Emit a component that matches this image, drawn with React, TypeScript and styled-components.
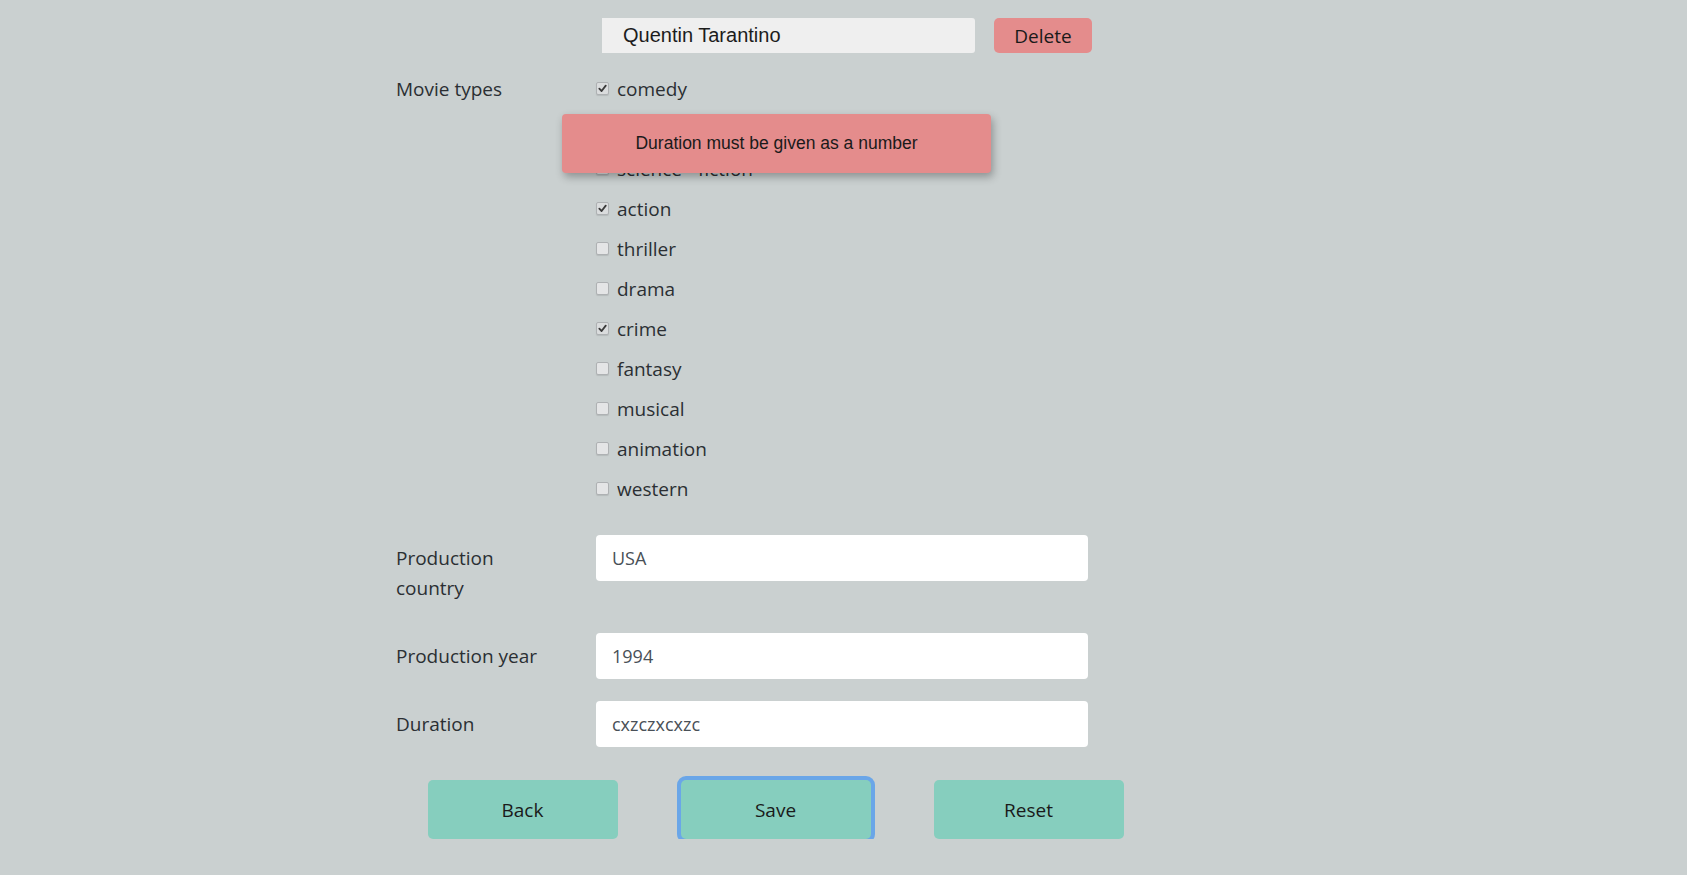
import React from "react";
import styled, { createGlobalStyle, css } from "styled-components";

const GlobalStyle = createGlobalStyle`
  html, body {
    margin: 0;
    padding: 0;
    background: #cad0d0;
  }
  body {
    font-family: "Open Sans", "Noto Sans", sans-serif;
    color: #2b2f33;
  }
  * { box-sizing: border-box; }
`;

const Form = styled.form`
  position: relative;
  width: 759px;
  margin-left: 396px;
  padding-top: 18px;
`;

const NameRow = styled.div`
  display: flex;
  align-items: center;
  gap: 19px;
  margin-left: 206px;
`;

const NameInput = styled.input`
  width: 373px;
  height: 35px;
  border: none;
  border-radius: 0 3px 3px 0;
  background: #efefef;
  padding: 0 0 0 21px;
  font-family: "Liberation Sans", Arial, sans-serif;
  font-size: 20px;
  color: #1c1c1c;
  outline: none;
`;

const DeleteButton = styled.button`
  width: 98px;
  height: 35px;
  border: none;
  border-radius: 5px;
  background: #e48c8c;
  font-family: "Open Sans", sans-serif;
  font-size: 19px;
  color: #1a1a1a;
  padding: 0;
  cursor: pointer;
`;

const TypesRow = styled.div`
  display: grid;
  grid-template-columns: 200px 1fr;
  margin-top: 16px;
`;

const Label = styled.label`
  font-size: 19px;
  line-height: 30px;
  color: #2b2f33;
`;

const TypesLabel = styled(Label)`
  line-height: 40px;
`;

const CheckList = styled.div`
  display: flex;
  flex-direction: column;
`;

const CheckRow = styled.label`
  display: flex;
  align-items: center;
  gap: 8px;
  height: 40px;
  font-size: 19px;
  color: #2b2f33;
`;

const Box = styled.span<{ $checked: boolean }>`
  width: 13px;
  height: 13px;
  border: 1px solid #aeb1b3;
  border-radius: 2px;
  background: #e4e5e6;
  display: inline-flex;
  align-items: center;
  justify-content: center;
  margin-top: -2px;
  box-shadow: 0 1px 1px rgba(0, 0, 0, 0.1);
  ${(p) =>
    p.$checked &&
    css`
      background: #dadcdd;
    `}
`;

const Fields = styled.div`
  margin-top: 26px;
  display: flex;
  flex-direction: column;
  gap: 22px;
`;

const FieldRow = styled.div`
  display: grid;
  grid-template-columns: 200px 492px;
  align-items: start;
`;

const FieldLabel = styled(Label)`
  padding: 8px 0;
  width: 150px;
`;

const TextInput = styled.input`
  width: 492px;
  height: 46px;
  border: none;
  border-radius: 4px;
  background: #ffffff;
  padding: 0 16px;
  font-family: "Open Sans", sans-serif;
  font-size: 18px;
  color: #495057;
  outline: none;
`;

const ButtonRow = styled.div`
  display: flex;
  justify-content: space-around;
  margin-top: 33px;
`;

const ActionButton = styled.button<{ $focused?: boolean }>`
  width: 190px;
  height: 59px;
  border: none;
  border-radius: 5px;
  background: #86cebe;
  font-family: "Open Sans", sans-serif;
  font-size: 19px;
  color: #1a1a1a;
  cursor: pointer;
  ${(p) =>
    p.$focused &&
    css`
      box-shadow: 0 0 0 4px #6aa6e8;
      border-radius: 5px;
    `}
`;

const Toast = styled.div`
  position: absolute;
  left: 166px;
  top: 114px;
  width: 429px;
  height: 59px;
  background: #e48c8c;
  border-radius: 4px;
  box-shadow: 2px 4px 8px rgba(0, 0, 0, 0.3);
  display: flex;
  align-items: center;
  justify-content: center;
  font-family: "Liberation Sans", Arial, sans-serif;
  font-size: 17.5px;
  color: #1a1a1a;
`;

const Check = () => (
  <svg width="9" height="9" viewBox="0 0 10 10">
    <path d="M1.5 5.2 L4 7.8 L8.6 1.8" fill="none" stroke="#3a3a3a" strokeWidth="2" strokeLinecap="round" strokeLinejoin="round" />
  </svg>
);

const types: { name: string; checked: boolean }[] = [
  { name: "comedy", checked: true },
  { name: "horror", checked: false },
  { name: "science - fiction", checked: false },
  { name: "action", checked: true },
  { name: "thriller", checked: false },
  { name: "drama", checked: false },
  { name: "crime", checked: true },
  { name: "fantasy", checked: false },
  { name: "musical", checked: false },
  { name: "animation", checked: false },
  { name: "western", checked: false },
];

export default function App() {
  return (
    <>
      <GlobalStyle />
      <Form onSubmit={(e) => e.preventDefault()}>
        <NameRow>
          <NameInput defaultValue="Quentin Tarantino" />
          <DeleteButton type="button">Delete</DeleteButton>
        </NameRow>
        <TypesRow>
          <TypesLabel>Movie types</TypesLabel>
          <CheckList>
            {types.map((t) => (
              <CheckRow key={t.name}>
                <Box $checked={t.checked}>{t.checked && <Check />}</Box>
                {t.name}
              </CheckRow>
            ))}
          </CheckList>
        </TypesRow>
        <Fields>
          <FieldRow>
            <FieldLabel>Production country</FieldLabel>
            <TextInput defaultValue="USA" />
          </FieldRow>
          <FieldRow>
            <FieldLabel>Production year</FieldLabel>
            <TextInput defaultValue="1994" />
          </FieldRow>
          <FieldRow>
            <FieldLabel>Duration</FieldLabel>
            <TextInput defaultValue="cxzczxcxzc" />
          </FieldRow>
        </Fields>
        <ButtonRow>
          <ActionButton type="button">Back</ActionButton>
          <ActionButton type="submit" $focused>
            Save
          </ActionButton>
          <ActionButton type="button">Reset</ActionButton>
        </ButtonRow>
        <Toast>Duration must be given as a number</Toast>
      </Form>
    </>
  );
}
